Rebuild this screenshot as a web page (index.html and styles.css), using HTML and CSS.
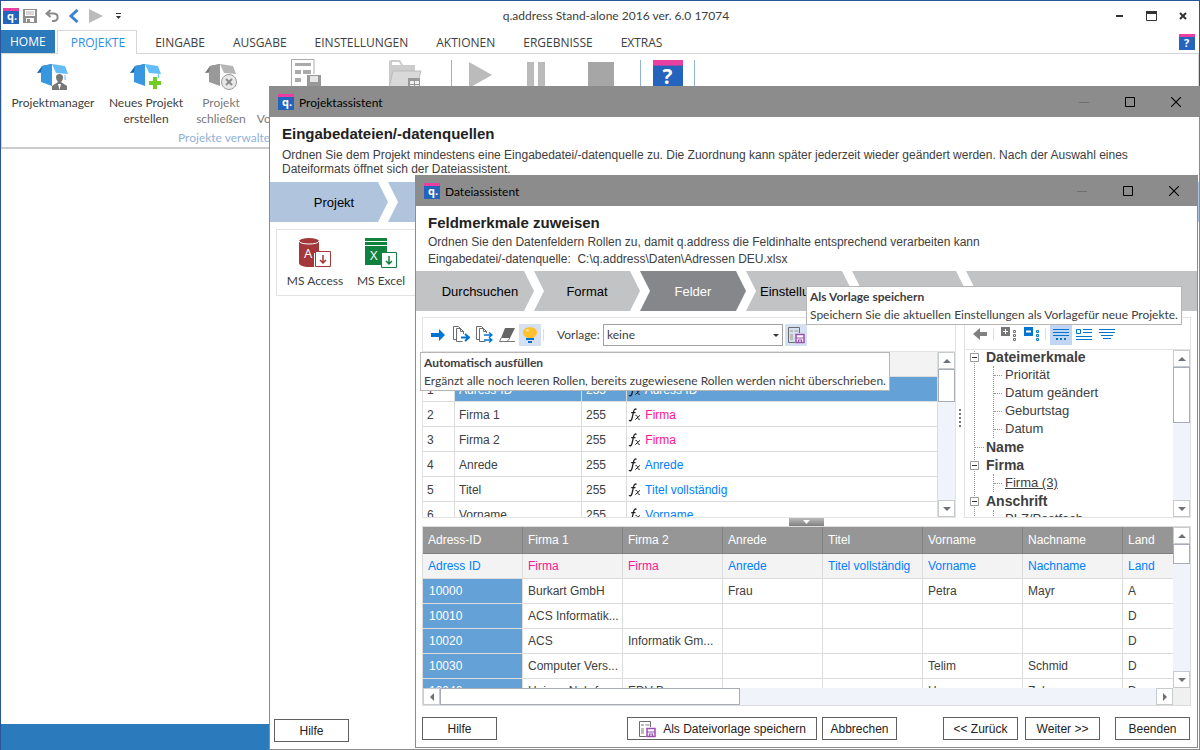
FILE: index.html
```html
<!DOCTYPE html>
<html lang="de">
<head>
    <meta charset="UTF-8">
    <meta name="viewport" content="width=device-width, initial-scale=1.0">
    <title>q.address Stand-alone 2016</title>
    <link rel="stylesheet" href="styles.css">
</head>
<body>
    <!-- Icons -->
    <svg class="sprite" aria-hidden="true">
        <symbol id="logo" viewBox="0 0 16 16">
            <rect width="16" height="16" fill="#2464bd"/>
            <rect width="16" height="3" fill="#e83fa0"/>
            <text x="4" y="12" font-family="Open Sans, sans-serif" font-size="11" font-weight="700" fill="#fff">q.</text>
        </symbol>
        <symbol id="help" viewBox="0 0 16 16">
            <rect width="16" height="16" fill="#2464bd"/>
            <rect width="16" height="3" fill="#e83fa0"/>
            <text x="5" y="13" font-family="Open Sans, sans-serif" font-size="11" font-weight="700" fill="#fff">?</text>
        </symbol>
        <symbol id="min" viewBox="0 0 10 10"><path d="M0 5.500h10" stroke="#6e6e6e"/></symbol>
        <symbol id="max" viewBox="0 0 10 10"><path d="M.5.500h9v9h-9z" fill="none" stroke="#000"/></symbol>
        <symbol id="close" viewBox="0 0 10 10"><path d="M0 0l10 10M10 0L0 10" stroke="#000" stroke-width="1.100"/></symbol>
        <symbol id="template" viewBox="0 0 18 18">
            <path d="M12.500 7V1.500H1.500v15H8" fill="none" stroke="#6d6d6d"/>
            <path d="M3 4h3v2H3zM7.500 4h4v2h-4zM3 8h3v6H3z" fill="#bdbdbd"/>
            <path d="M9 8.500h8v8H9z" fill="#fff" stroke="#9a4fb0" stroke-width="1.500"/>
            <path d="M9 12h8M11.500 16.500V14h3v2.500" fill="none" stroke="#9a4fb0" stroke-width="1.200"/>
        </symbol>
        <symbol id="fx" viewBox="0 0 14 14">
            <path d="M8.500 1.500C7.300.4 6.200 1.200 5.700 3.200L4 10.500C3.500 12.700 2.300 13.300 1 12.300M3.200 4.700h4.300" fill="none" stroke="#222" stroke-width="1.300"/>
            <path d="M7.500 7.500c1.500-.6 1.800 1 2.300 2.300.4 1.200.8 2.200 2 1.500M12 7.300L7.300 11.600" fill="none" stroke="#222"/>
        </symbol>
        <symbol id="up" viewBox="0 0 8 4"><path d="M0 4l4-4 4 4z" fill="#6d7278"/></symbol>
        <symbol id="down" viewBox="0 0 8 4"><path d="M0 0l4 4 4-4z" fill="#6d7278"/></symbol>
        <symbol id="minus" viewBox="0 0 9 9"><path d="M.5.500h8v8h-8z" fill="#fff" stroke="#999"/><path d="M2 4.500h5" stroke="#333"/></symbol>
    </svg>

    <!-- Hauptfenster -->
    <div class="app">
        <header class="titlebar">
            <div class="quick">
                <svg width="16" height="16"><use href="#logo"/></svg>
                <button aria-label="Speichern"><svg width="14" height="14"><path d="M0 0h14v14H0z" fill="#8e8e8e"/><path d="M2 1h10v6H2zM3 9h8v4H3z" fill="#fff"/><path d="M3 2h8v4H3z" fill="#d7d7d7"/><path d="M4 10h3v3H4z" fill="#8e8e8e"/></svg></button>
                <button aria-label="Rückgängig"><svg width="14" height="14"><path d="M5.500 1L1.500 4.500l4 3.500M1.500 4.500h7c5.500 0 5.500 7.500 0 7.500H7" fill="none" stroke="#8a8a8a" stroke-width="2"/></svg></button>
                <button aria-label="Zurück"><svg width="10" height="14"><path d="M8.500 1L2 7l6.500 6" fill="none" stroke="#3d85d0" stroke-width="3"/></svg></button>
                <button aria-label="Start"><svg width="14" height="14"><path d="M0 0l14 7-14 7z" fill="#bbb"/></svg></button>
                <button aria-label="Anpassen"><svg width="5" height="6"><path d="M0 .5h5" stroke="#333"/><path d="M0 3h5L2.500 6z" fill="#333"/></svg></button>
            </div>
            <div class="caption">q.address Stand-alone 2016 ver. 6.0 17074</div>
            <div class="app-controls">
                <button aria-label="Minimieren"><svg width="7" height="10"><path d="M0 5h7" stroke="#333" stroke-width="2"/></svg></button>
                <button aria-label="Maximieren"><svg width="11" height="10"><path d="M.5.5h10v9H.5z" fill="none" stroke="#333"/><path d="M0 1.500h11" stroke="#333" stroke-width="3"/></svg></button>
                <button aria-label="Schließen"><svg width="8" height="8"><path d="M1 1l6 6M7 1L1 7" stroke="#333" stroke-width="2"/></svg></button>
            </div>
        </header>

        <nav class="tabs">
            <a class="home" href="#">HOME</a>
            <a class="active" href="#">PROJEKTE</a>
            <a href="#">EINGABE</a>
            <a href="#">AUSGABE</a>
            <a href="#">EINSTELLUNGEN</a>
            <a href="#">AKTIONEN</a>
            <a href="#">ERGEBNISSE</a>
            <a href="#">EXTRAS</a>
            <button class="tabs-help" aria-label="Hilfe"><svg width="16" height="16"><use href="#help"/></svg></button>
        </nav>

        <div class="ribbon">
            <div class="group">
                <div class="group-items">
                    <button class="big w-manager">
                        <svg width="32" height="28">
                            <path d="M0 10l5-7 10-2-3 8z" fill="#1768a8"/><path d="M5 3l10-2v22L4 19V9z" fill="#3798e0"/>
                            <path d="M15 1l13 2 3 8-12-1z" fill="#64bdf8"/><path d="M28 12v5" fill="none" stroke="#64bdf8"/>
                            <path d="M19 14c0-4 7-4 7 0 0 3-1 4-2 5l6 4v4H15v-4l6-4c-1-1-2-3-2-5z" fill="#777"/><path d="M21 21h3l-1.500 6z" fill="#fff"/>
                        </svg>
                        <span>Projektmanager</span>
                    </button>
                    <button class="big w-new">
                        <svg width="32" height="28">
                            <path d="M0 10l5-7 10-2-3 8z" fill="#1768a8"/><path d="M5 3l10-2v22L4 19V9z" fill="#3798e0"/>
                            <path d="M15 1l13 2 3 8-12-1z" fill="#64bdf8"/><path d="M28.500 11v4" stroke="#64bdf8"/>
                            <path d="M23 14h4v4h4v4h-4v4h-4v-4h-4v-4h4z" fill="#72cc23"/>
                        </svg>
                        <span>Neues Projekt<br>erstellen</span>
                    </button>
                    <button class="big w-close off">
                        <svg width="32" height="28">
                            <path d="M0 10l5-7 10-2-3 8z" fill="#777"/><path d="M5 3l10-2v22L4 19V9z" fill="#999"/>
                            <path d="M15 1l13 2 3 8-12-1z" fill="#b5b5b5"/>
                            <circle cx="24" cy="19" r="7.500" fill="#e8e8e8" stroke="#999"/><path d="M21 16l6 6M27 16l-6 6" stroke="#8b8b8b" stroke-width="2"/>
                        </svg>
                        <span>Projekt<br>schließen</span>
                    </button>
                    <button class="big w-template off" aria-label="Vorlagen speichern">
                        <svg width="32" height="28">
                            <path d="M23 15V.5H.5V28" fill="none" stroke="#aaa"/><path d="M4 4h16v3H4zM4 11h6v4H4zM12 11h8v4h-8zM4 19h6v4H4z" fill="#aaa"/>
                            <path d="M16 16h14v12H16z" fill="#999"/><path d="M19 17h8v6h-8z" fill="#e6e6e6"/>
                        </svg>
                        <span><br>Vorlagen speichern</span>
                    </button>
                </div>
                <div class="group-label">Projekte verwalten</div>
            </div>
            <button class="tool w-folder" aria-label="Projektordner"><svg width="34" height="28"><path d="M1 28V1l2-1h9l3 5h12v23z" fill="#ccc"/><path d="M4 2h7l2 3H4z" fill="#fff"/><path d="M5 11h28l-5 17H1z" fill="#d9d9d9" stroke="#bbb"/><path d="M20 18h12v10H20z" fill="#999"/><path d="M22 21h4v3h-4zM27 21h4v3h-4zM22 25h4v3h-4zM27 25h4v3h-4z" fill="#eee"/></svg></button>
            <button class="tool w-play" aria-label="Ausführen"><svg width="24" height="28"><path d="M0 2l23 13-23 13z" fill="#bbb"/></svg></button>
            <button class="tool w-pause" aria-label="Pause"><svg width="18" height="28"><path d="M0 2h7v26H0zM11 2h7v26h-7z" fill="#bbb"/></svg></button>
            <button class="tool w-stop" aria-label="Stopp"><svg width="26" height="28"><path d="M0 2h26v26H0z" fill="#a6a6a6"/></svg></button>
            <button class="tool w-help" aria-label="Hilfe"><svg width="30" height="30"><use href="#help"/></svg></button>
        </div>
        <main class="workspace"></main>
        <footer class="status"></footer>
    </div>

    <!-- Projektassistent -->
    <section class="window project-window">
        <header class="window-title">
            <svg width="16" height="16"><use href="#logo"/></svg>
            <span>Projektassistent</span>
            <div class="controls">
                <button aria-label="Minimieren"><svg width="10" height="10"><use href="#min"/></svg></button>
                <button aria-label="Maximieren"><svg width="10" height="10"><use href="#max"/></svg></button>
                <button aria-label="Schließen"><svg width="10" height="10"><use href="#close"/></svg></button>
            </div>
        </header>
        <div class="intro">
            <h2>Eingabedateien/-datenquellen</h2>
            <p>Ordnen Sie dem Projekt mindestens eine Eingabedatei/-datenquelle zu. Die Zuordnung kann später jederzeit wieder geändert werden. Nach der Auswahl eines Dateiformats öffnet sich der Dateiassistent.</p>
        </div>
        <div class="steps blue">
            <button class="step first">Projekt</button>
            <button class="step last" aria-label="Weiterer Schritt"></button>
        </div>
        <div class="formats">
            <button>
                <svg width="34" height="32"><path d="M1 4v22c0 2 4 4 10 4h5V16h5V4z" fill="#a4373a"/><ellipse cx="11" cy="4" rx="10" ry="3" fill="#a4373a"/><path d="M1 4c0 4 20 4 20 0" fill="none" stroke="#fff"/><text x="6" y="21" font-family="Open Sans, sans-serif" font-size="13" fill="#fff">A</text><path d="M17.500 14.500h15v15h-15z" fill="#fff" stroke="#a4373a"/><path d="M25 18v8M22 23l3 3 3-3" fill="none" stroke="#a4373a" stroke-width="1.500"/></svg>
                <span>MS Access</span>
            </button>
            <button>
                <svg width="34" height="32"><path d="M1 1h22v3H1zM1 5h22v3H1zM1 9h22v7h-6v12H1z" fill="#10813f"/><text x="6" y="23" font-family="Open Sans, sans-serif" font-size="13" fill="#fff">X</text><path d="M17.500 15.500h15v15h-15z" fill="#fff" stroke="#10813f"/><path d="M25 19v8M22 24l3 3 3-3" fill="none" stroke="#10813f" stroke-width="1.500"/></svg>
                <span>MS Excel</span>
            </button>
        </div>
        <div class="project-footer"><button class="btn">Hilfe</button></div>
    </section>

    <!-- Dateiassistent -->
    <section class="window file-window">
        <header class="window-title">
            <svg width="16" height="16"><use href="#logo"/></svg>
            <span>Dateiassistent</span>
            <div class="controls">
                <button aria-label="Minimieren"><svg width="10" height="10"><use href="#min"/></svg></button>
                <button aria-label="Maximieren"><svg width="10" height="10"><use href="#max"/></svg></button>
                <button aria-label="Schließen"><svg width="10" height="10"><use href="#close"/></svg></button>
            </div>
        </header>
        <div class="intro">
            <h2>Feldmerkmale zuweisen</h2>
            <p>Ordnen Sie den Datenfeldern Rollen zu, damit q.address die Feldinhalte entsprechend verarbeiten kann</p>
            <p>Eingabedatei/-datenquelle:&nbsp; C:\q.address\Daten\Adressen DEU.xlsx</p>
        </div>
        <div class="steps">
            <button class="step first">Durchsuchen</button>
            <button class="step">Format</button>
            <button class="step current">Felder</button>
            <button class="step">Einstellungen</button>
            <button class="step wide" aria-label="Schritt 5"></button>
            <button class="step last" aria-label="Schritt 6"></button>
        </div>

        <div class="panels">
            <div class="panel fields">
                <div class="toolbar">
                    <button aria-label="Zuweisen"><svg width="14" height="12"><path d="M0 4h8V0l6 6-6 6V8H0z" fill="#0074d0"/></svg></button>
                    <button aria-label="Rolle übernehmen"><svg width="17" height="17"><path d="M3.500 13.500h-3V.5h5M3.500 2.500h4l3 3V8M3.500 2.500v13h6M7.500 2.500v3h3M5.500.5l5 5" fill="none" stroke="#6d6d6d"/><path d="M8 11.500h7M12 8l4 3.500-4 3.500" fill="none" stroke="#0074d0" stroke-width="2"/></svg></button>
                    <button aria-label="Alle Rollen übernehmen"><svg width="17" height="17"><path d="M3.500 13.500h-3V.5h5M3.500 2.500h4l3 3V7M3.500 2.500v13h6M7.500 2.500v3h3M5.500.5l5 5" fill="none" stroke="#6d6d6d"/><path d="M8 9h8M8 14h8M13 6.500L16 9l-3 2.500M13 11.500l3 2.500-3 2.500" fill="none" stroke="#0074d0" stroke-width="1.300"/></svg></button>
                    <button aria-label="Löschen"><svg width="16" height="14"><path d="M6 0h10l-5 10H2z" fill="#666"/><path d="M2 10L.5 13.500H8L11 10M8 13.500h8" fill="none" stroke="#777"/></svg></button>
                    <div class="tip-anchor">
                        <button class="lit" aria-label="Automatisch ausfüllen"><svg width="14" height="16"><ellipse cx="7" cy="5.500" rx="7" ry="5.500" fill="#ffc02e"/><path d="M4 9h6v2H4z" fill="#ffc02e"/><ellipse cx="4.500" cy="3.500" rx="1.500" ry="1" fill="#fff1c2"/><path d="M3 12h8M5 15h4" stroke="#0074d0" stroke-width="2"/></svg></button>
                        <div class="tip tip-fill" role="tooltip"><b>Automatisch ausfüllen</b><span>Ergänzt alle noch leeren Rollen, bereits zugewiesene Rollen werden nicht überschrieben.</span></div>
                    </div>
                    <i class="sep"></i>
                    <label for="vorlage">Vorlage:</label>
                    <div class="select-box"><select id="vorlage"><option>keine</option></select></div>
                    <div class="tip-anchor">
                        <button class="lit" aria-label="Als Vorlage speichern"><svg width="18" height="18"><use href="#template"/></svg></button>
                        <div class="tip tip-save" role="tooltip"><b>Als Vorlage speichern</b><span>Speichern Sie die aktuellen Einstellungen als Vorlagefür neue Projekte.</span></div>
                    </div>
                </div>
                <div class="scroll-area">
                    <div class="clip">
                        <table class="field-table">
                            <colgroup><col class="c-no"><col class="c-name"><col class="c-len"><col></colgroup>
                            <thead><tr><th></th><th></th><th></th><th></th></tr></thead>
                            <tbody>
                                <tr class="selected"><td>1</td><td>Adress-ID</td><td>255</td><td><svg width="14" height="14"><use href="#fx"/></svg> Adress ID</td></tr>
                                <tr><td>2</td><td>Firma 1</td><td>255</td><td class="pink"><svg width="14" height="14"><use href="#fx"/></svg> Firma</td></tr>
                                <tr><td>3</td><td>Firma 2</td><td>255</td><td class="pink"><svg width="14" height="14"><use href="#fx"/></svg> Firma</td></tr>
                                <tr><td>4</td><td>Anrede</td><td>255</td><td class="link"><svg width="14" height="14"><use href="#fx"/></svg> Anrede</td></tr>
                                <tr><td>5</td><td>Titel</td><td>255</td><td class="link"><svg width="14" height="14"><use href="#fx"/></svg> Titel vollständig</td></tr>
                                <tr><td>6</td><td>Vorname</td><td>255</td><td class="link"><svg width="14" height="14"><use href="#fx"/></svg> Vorname</td></tr>
                            </tbody>
                        </table>
                    </div>
                    <div class="vbar">
                        <button aria-label="Nach oben"><svg width="8" height="4"><use href="#up"/></svg></button>
                        <div class="thumb h-fields"></div>
                        <button class="end" aria-label="Nach unten"><svg width="8" height="4"><use href="#down"/></svg></button>
                    </div>
                </div>
            </div>
            <div class="grip"><svg width="2" height="18"><path d="M1 0v18" stroke="#777" stroke-width="2" stroke-dasharray="2 2"/></svg></div>
            <div class="panel roles">
                <div class="toolbar">
                    <button aria-label="Zurück"><svg width="14" height="12"><path d="M14 4H7V0L0 6l7 6V8h7z" fill="#808080"/></svg></button>
                    <i class="sep"></i>
                    <button aria-label="Alle öffnen"><svg width="16" height="16"><path d="M0 1h9v9H0z" fill="#777"/><path d="M2 5.500h5M4.500 3v5" stroke="#fff"/><path d="M12.500 4.500h2v2h-2zM12.500 8.500h2v2h-2zM12.500 12.500h2v2h-2z" fill="none" stroke="#777"/></svg></button>
                    <button aria-label="Alle schließen"><svg width="16" height="16"><path d="M0 1h9v9H0z" fill="#0074d0"/><path d="M2 5.500h5" stroke="#fff" stroke-width="2"/><path d="M12.500 4.500h2v2h-2zM12.500 8.500h2v2h-2zM12.500 12.500h2v2h-2z" fill="none" stroke="#0074d0"/></svg></button>
                    <i class="sep"></i>
                    <button class="lit strong" aria-label="Kurzansicht"><svg width="16" height="12"><path d="M0 1.500h16M0 4.500h16M0 7.500h16" stroke="#0074d0"/><path d="M3 11h2M7 11h2M11 11h2" stroke="#0074d0" stroke-width="2"/></svg></button>
                    <button aria-label="Detailansicht"><svg width="16" height="12"><path d="M.5 1.500h4v4h-4zM7 1.500h9M7 4.500h9M0 8.500h16M0 11.500h16" fill="none" stroke="#0074d0"/></svg></button>
                    <button aria-label="Zentriert"><svg width="16" height="12"><path d="M0 1.500h16M0 4.500h16M2 7.500h12M4 10.500h8" stroke="#0074d0"/></svg></button>
                </div>
                <div class="scroll-area">
                    <div class="clip">
                        <ul class="tree">
                            <li><div class="node"><button aria-label="Dateimerkmale zuklappen"><svg width="9" height="9"><use href="#minus"/></svg></button><b>Dateimerkmale</b></div>
                                <ul><li>Priorität</li><li>Datum geändert</li><li>Geburtstag</li><li>Datum</li></ul>
                            </li>
                            <li><div class="node leaf"><b>Name</b></div></li>
                            <li><div class="node"><button aria-label="Firma zuklappen"><svg width="9" height="9"><use href="#minus"/></svg></button><b>Firma</b></div>
                                <ul><li><a href="#">Firma (3)</a></li></ul>
                            </li>
                            <li><div class="node"><button aria-label="Anschrift zuklappen"><svg width="9" height="9"><use href="#minus"/></svg></button><b>Anschrift</b></div>
                                <ul><li>PLZ/Postfach</li></ul>
                            </li>
                        </ul>
                    </div>
                    <div class="vbar">
                        <button aria-label="Nach oben"><svg width="8" height="4"><use href="#up"/></svg></button>
                        <div class="thumb h-roles"></div>
                        <button class="end" aria-label="Nach unten"><svg width="8" height="4"><use href="#down"/></svg></button>
                    </div>
                </div>
            </div>
        </div>

        <div class="splitter"><button aria-label="Vorschau ein- und ausblenden"><svg width="7" height="4"><path d="M0 0h7L3.500 4z" fill="#fff"/></svg></button></div>

        <div class="preview">
            <div class="preview-main">
                <div class="clip">
                    <table class="data-table">
                        <thead>
                            <tr><th>Adress-ID</th><th>Firma 1</th><th>Firma 2</th><th>Anrede</th><th>Titel</th><th>Vorname</th><th>Nachname</th><th>Land</th></tr>
                        </thead>
                        <tbody>
                            <tr class="roles-row"><td class="link">Adress ID</td><td class="pink">Firma</td><td class="pink">Firma</td><td class="link">Anrede</td><td class="link">Titel vollständig</td><td class="link">Vorname</td><td class="link">Nachname</td><td class="link">Land</td></tr>
                            <tr><td>10000</td><td>Burkart GmbH</td><td></td><td>Frau</td><td></td><td>Petra</td><td>Mayr</td><td>A</td></tr>
                            <tr><td>10010</td><td>ACS Informatik...</td><td></td><td></td><td></td><td></td><td></td><td>D</td></tr>
                            <tr><td>10020</td><td>ACS</td><td>Informatik Gm...</td><td></td><td></td><td></td><td></td><td>D</td></tr>
                            <tr><td>10030</td><td>Computer Vers...</td><td></td><td></td><td></td><td>Telim</td><td>Schmid</td><td>D</td></tr>
                            <tr><td>10040</td><td>Heinze Nahrfu...</td><td>EDV-B</td><td></td><td></td><td>Hans</td><td>Zahn</td><td>D</td></tr>
                        </tbody>
                    </table>
                </div>
                <div class="hbar">
                    <button aria-label="Nach links"><svg width="4" height="8"><path d="M4 0v8L0 4z" fill="#6d7278"/></svg></button>
                    <div class="thumb"></div>
                    <button class="end" aria-label="Nach rechts"><svg width="4" height="8"><path d="M0 0v8l4-4z" fill="#6d7278"/></svg></button>
                </div>
            </div>
            <div class="vbar-column">
                <div class="vbar">
                    <button aria-label="Nach oben"><svg width="8" height="4"><use href="#up"/></svg></button>
                    <div class="thumb h-preview"></div>
                    <button class="end" aria-label="Nach unten"><svg width="8" height="4"><use href="#down"/></svg></button>
                </div>
                <div class="corner"></div>
            </div>
        </div>

        <footer class="wizard-footer">
            <button class="btn">Hilfe</button>
            <button class="btn save"><svg width="18" height="18"><use href="#template"/></svg>Als Dateivorlage speichern</button>
            <button class="btn">Abbrechen</button>
            <button class="btn back">&lt;&lt; Zurück</button>
            <button class="btn next">Weiter &gt;&gt;</button>
            <button class="btn quit">Beenden</button>
        </footer>
    </section>
</body>
</html>
```
FILE: styles.css
```css
/* Allgemein */
* {
    margin: 0;
    padding: 0;
    box-sizing: border-box;
}

body {
    font-family: 'Liberation Sans', Arial, sans-serif;
    font-size: 12px;
    color: #404040;
    height: 100vh;
    overflow: hidden;
    position: relative;
}

button {
    font: inherit;
    color: inherit;
    background: none;
    border: none;
}

svg {
    display: block;
    flex: none;
}

ul {
    list-style: none;
}

.sprite {
    display: none;
}

/* Hauptfenster */
.app {
    height: 100%;
    display: flex;
    flex-direction: column;
    border: 1px solid #2b579a;
    border-bottom: none;
    background: #fff;
    font-family: Lato, sans-serif;
}

.titlebar {
    display: grid;
    grid-template-columns: 1fr auto 1fr;
    align-items: center;
    height: 29px;
}

.quick {
    display: flex;
    align-items: center;
    padding-left: 2px;
}

.quick button {
    display: flex;
    justify-content: center;
    width: 22px;
}

.caption {
    padding-left: 32px;
}

.app-controls {
    display: flex;
    justify-content: flex-end;
}

.app-controls button {
    width: 32px;
    height: 28px;
    display: flex;
    align-items: center;
    justify-content: center;
}

.tabs {
    display: flex;
    height: 24px;
    border-bottom: 1px solid #d6d6d6;
    font-family: 'Open Sans', sans-serif;
}

.tabs a {
    padding: 0 14px;
    line-height: 25px;
    color: #404040;
    text-decoration: none;
}

.tabs .home {
    padding: 0 9px;
    margin-right: 2px;
    line-height: 24px;
    background: #2b7abc;
    color: #fff;
}

.tabs .active {
    padding: 0 11px 0 13px;
    margin-right: 4px;
    height: 24px;
    line-height: 24px;
    border: 1px solid #d6d6d6;
    border-bottom: none;
    background: #fff;
    color: #2a8dea;
}

.tabs-help {
    margin-left: auto;
    padding-right: 4px;
}

.ribbon {
    display: flex;
    height: 95px;
    border: 1px solid #d6d6d6;
    border-top: none;
    border-bottom: 2px solid #ccc;
}

.group {
    display: flex;
    flex-direction: column;
    width: 360px;
}

.group-items {
    display: flex;
    flex: 1;
}

.big {
    display: flex;
    flex-direction: column;
    align-items: center;
    padding-top: 9px;
    line-height: 16px;
    white-space: nowrap;
}

.big span {
    margin-top: 4px;
}

.off {
    color: #7a7a7a;
}

.w-manager { width: 102px; }
.w-new { width: 84px; }
.w-close { width: 66px; }
.w-template { width: 106px; padding-top: 5px; }
.w-template span { margin-top: 8px; }

.group-label {
    height: 20px;
    padding-left: 176px;
    line-height: 22px;
    color: #92b1d6;
}

.tool {
    display: flex;
    justify-content: center;
    height: 34px;
    margin-top: 6px;
}

.w-folder { width: 90px; padding-right: 4px; border-right: 1px solid #92b1d6; }
.w-play { width: 58px; }
.w-pause { width: 52px; }
.w-stop { width: 78px; }
.w-help { width: 55px; border: solid #92b1d6; border-width: 0 1px; }

.workspace {
    flex: 1;
}

.status {
    height: 26px;
    background: #2b7abc;
}

/* Assistenten */
.window {
    position: absolute;
    display: flex;
    flex-direction: column;
    background: #fff;
    border: 1px solid #8c8c8c;
}

.project-window {
    top: 86px;
    left: 269px;
    right: 0;
    bottom: 0;
}

.file-window {
    top: 175px;
    left: 415px;
    right: 2px;
    bottom: 2px;
}

.window-title {
    display: flex;
    align-items: center;
    gap: 5px;
    height: 30px;
    padding-left: 8px;
    background: #8c8c8c;
    color: #000;
    font-family: Lato, sans-serif;
}

.controls {
    display: flex;
    margin-left: auto;
}

.controls button {
    display: flex;
    align-items: center;
    justify-content: center;
    width: 46px;
    height: 30px;
}

.intro {
    height: 65px;
    padding: 8px 12px 0;
}

.intro h2 {
    margin-bottom: 2px;
    font-size: 15px;
    line-height: 18px;
    color: #222;
}

.intro p {
    line-height: 17px;
}

.project-window .intro p {
    padding-top: 3px;
    line-height: 14px;
    max-width: 890px;
}

/* Schritte */
.steps {
    display: flex;
    height: 40px;
    font-size: 13px;
}

.step {
    width: 106px;
    background: #c2c3c5;
    color: #000;
    clip-path: polygon(0 0, calc(100% - 10px) 0, 100% 50%, calc(100% - 10px) 100%, 0 100%, 10px 50%);
}

.step.first {
    width: 118px;
    padding-left: 10px;
    clip-path: polygon(0 0, calc(100% - 10px) 0, 100% 50%, calc(100% - 10px) 100%, 0 100%);
}

.step.wide {
    width: 114px;
}

.step.last {
    flex: 1;
    clip-path: polygon(0 0, 100% 0, 100% 100%, 0 100%, 10px 50%);
}

.step.current {
    background: #86878b;
    color: #fff;
}

.blue .step {
    background: #b0c4de;
}

.formats {
    display: flex;
    height: 67px;
    margin: 7px 6px 0;
    padding: 7px 5px 0;
    border: 1px solid #e3e3e3;
    font-family: Lato, sans-serif;
}

.formats button {
    display: flex;
    flex-direction: column;
    align-items: center;
    gap: 4px;
    width: 66px;
    white-space: nowrap;
}

.btn {
    display: flex;
    align-items: center;
    justify-content: center;
    width: 75px;
    height: 23px;
    border: 1px solid #606060;
    background: #fff;
    color: #222;
    white-space: nowrap;
}

.project-footer {
    margin-top: auto;
    padding: 0 4px 7px;
}

/* Panels */
.panels {
    display: flex;
    flex: 1;
    min-height: 0;
    margin: 6px 6px 0;
}

.panel {
    display: flex;
    flex-direction: column;
    border: 1px solid #e3e3e3;
}

.fields {
    flex: 1;
    min-width: 0;
}

.roles {
    width: 227px;
}

.grip {
    display: flex;
    align-items: center;
    justify-content: center;
    width: 8px;
}

.toolbar {
    display: flex;
    align-items: center;
    gap: 1px;
    height: 34px;
    padding-left: 4px;
    border-bottom: 1px solid #e3e3e3;
    font-family: Lato, sans-serif;
}

.roles .toolbar {
    height: 32px;
}

.toolbar button {
    display: flex;
    align-items: center;
    justify-content: center;
    width: 22px;
    height: 22px;
}

.toolbar .lit {
    background: #d5e0f2;
}

.toolbar .strong {
    background: #c2d5f2;
}

.sep {
    width: 1px;
    height: 12px;
    margin: 0 3px 0 1px;
    background: #ddd;
}

.toolbar label {
    width: 45px;
    margin-left: 9px;
}

.select-box {
    position: relative;
    width: 180px;
    height: 22px;
    margin-right: 1px;
}

.select-box select {
    width: 100%;
    height: 100%;
    padding: 0 3px;
    border: 1px solid #a0a0a0;
    border-radius: 0;
    background: #fff;
    color: #404040;
    font: inherit;
    appearance: none;
}

.select-box::after {
    content: '';
    position: absolute;
    top: 10px;
    right: 4px;
    border: 3px solid transparent;
    border-top-color: #333;
    border-bottom: none;
}

/* Tooltips */
.tip-anchor {
    position: relative;
}

.tip {
    position: absolute;
    z-index: 5;
    display: flex;
    flex-direction: column;
    gap: 1px;
    padding: 1px 3px;
    border: 1px solid #b5b5b5;
    background: #fff;
    line-height: 17px;
    white-space: nowrap;
}

.tip-fill {
    top: 28px;
    left: -99px;
}

.tip-save {
    top: -38px;
    left: 21px;
}

/* Bildlauf */
.scroll-area {
    display: flex;
    flex: 1;
    min-height: 0;
}

.clip {
    flex: 1;
    min-width: 0;
    min-height: 0;
    overflow: hidden;
}

.vbar {
    display: flex;
    flex-direction: column;
    width: 17px;
    background: #f0f4fa;
}

.vbar button,
.hbar button {
    display: flex;
    align-items: center;
    justify-content: center;
    width: 17px;
    height: 17px;
    border: 1px solid #c5cccb;
    background: #fff;
}

.vbar .end {
    margin-top: auto;
}

.thumb {
    border: 1px solid #a8acb8;
    background: #fff;
}

.h-fields { height: 33px; }
.h-roles { height: 56px; }
.h-preview { height: 20px; }

/* Tabellen */
table {
    border-collapse: separate;
    border-spacing: 0;
    table-layout: fixed;
}

th,
td {
    height: 25px;
    padding-left: 5px;
    border-right: 1px solid #dcdcdc;
    border-bottom: 1px solid #dcdcdc;
    font-weight: normal;
    text-align: left;
    white-space: nowrap;
    overflow: hidden;
}

.pink {
    color: #ff1493;
}

.link {
    color: #007fff;
}

.field-table {
    width: 100%;
}

.c-no { width: 32px; }
.c-name { width: 127px; }
.c-len { width: 45px; }

.field-table th {
    background: #f3f3f3;
}

.field-table td {
    padding-top: 2px;
    padding-left: 4px;
}

.field-table td:last-child {
    padding-left: 1px;
}

.field-table td svg {
    display: inline-block;
    vertical-align: -3px;
}

.selected td {
    background: #64a1d6;
    color: #fff;
}

.selected td:first-child {
    background: #fff;
    color: #404040;
}

.data-table {
    width: 800px;
}

.data-table th {
    height: 27px;
    background: #969696;
    border-color: #808080;
    color: #fff;
}

.data-table td:first-child {
    padding-left: 6px;
    background: #64a1d6;
    color: #fff;
}

.data-table .roles-row td {
    background: #f3f3f3;
}

.data-table .roles-row td:first-child {
    padding-left: 5px;
    color: #007fff;
}

/* Baum */
.tree {
    margin-left: 9px;
    border-left: 1px dotted #999;
    font-size: 13px;
    line-height: 18px;
    margin-top: -2px;
}

.node {
    display: flex;
    align-items: center;
    height: 18px;
    font-size: 14px;
}

.node button {
    margin: 0 7px 0 -5px;
}

.leaf::before {
    content: '';
    width: 9px;
    margin-right: 2px;
    border-top: 1px dotted #999;
}

.tree ul {
    margin-left: 18px;
    border-left: 1px dotted #999;
}

.tree ul li {
    display: flex;
    align-items: center;
    height: 18px;
}

.tree ul li::before {
    content: '';
    width: 8px;
    margin-right: 3px;
    border-top: 1px dotted #999;
}

.tree a {
    color: inherit;
}

/* Vorschau */
.splitter {
    display: flex;
    justify-content: center;
    height: 8px;
}

.splitter button {
    display: flex;
    align-items: center;
    justify-content: center;
    width: 35px;
    background: linear-gradient(#bbb, #808080);
}

.preview {
    display: flex;
    height: 180px;
    margin: 0 6px;
    border: 1px solid #dcdcdc;
}

.preview-main {
    display: flex;
    flex: 1;
    flex-direction: column;
    min-width: 0;
}

.hbar {
    display: flex;
    height: 17px;
    background: #f0f4fa;
}

.hbar .thumb {
    width: 40%;
}

.hbar .end {
    margin-left: auto;
}

.vbar-column {
    display: flex;
    flex-direction: column;
}

.vbar-column .vbar {
    flex: 1;
}

.corner {
    height: 17px;
    background: #f0f0f0;
}

.wizard-footer {
    display: flex;
    gap: 5px;
    padding: 11px 7px 7px 6px;
}

.btn.save {
    width: 190px;
    margin-left: auto;
    gap: 7px;
}

.btn.back {
    margin-left: 41px;
}

.btn.next {
    margin-left: 2px;
}

.btn.quit {
    margin-left: 10px;
}
```
